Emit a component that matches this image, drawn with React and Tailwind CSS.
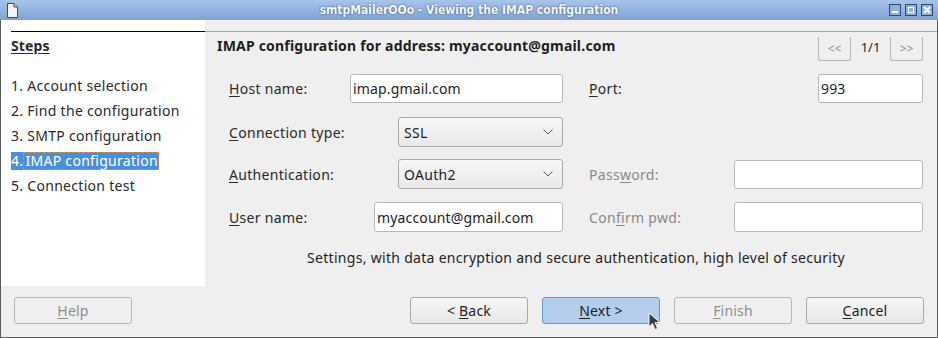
import React from "react";

function U({ children }) {
  return <span className="underline underline-offset-[2px] decoration-1">{children}</span>;
}

function TextInput({ value, className }) {
  return (
    <div className={"bg-white border border-[#b8b8b8] rounded-[3px] flex items-center pl-[2px] text-[14px] tracking-[0.15px] text-[#1e1e1e] " + className}>
      {value}
    </div>
  );
}

function Select({ value }) {
  return (
    <div className="w-[165px] h-[30px] rounded-[3px] border border-[#aaaaaa] bg-gradient-to-b from-[#f7f7f7] to-[#e9e9e9] flex items-center pl-[5px] pr-[9px] justify-between text-[14px] text-[#1e1e1e]">
      <span>{value}</span>
      <svg width="10" height="6" viewBox="0 0 10 6" className="text-[#555]">
        <path d="M0.5 0.5 L5 5 L9.5 0.5" fill="none" stroke="currentColor" strokeWidth="1" />
      </svg>
    </div>
  );
}

function Btn({ children, disabled, primary }) {
  let cls =
    "w-[118px] h-[27px] rounded-[3px] border flex items-center justify-center text-[14px] tracking-[0.2px] ";
  if (primary) cls += "bg-[#b4cdec] border-[#5f9ad8] text-[#1e1e1e]";
  else if (disabled) cls += "bg-[#efefef] border-[#b5b5b5] text-[#8e8e8e]";
  else cls += "bg-gradient-to-b from-[#f6f6f6] to-[#e8e8e8] border-[#a9a9a9] text-[#1e1e1e]";
  return (
    <div className={cls}>
      <span className="whitespace-pre">{children}</span>
    </div>
  );
}

export default function App() {
  return (
    <div className="relative w-[938px] h-[338px] overflow-hidden bg-[#efefef] font-['Noto_Sans',sans-serif] text-[14px] tracking-[0.3px] text-[#2a2a2a] flex flex-col">
      {/* Title bar */}
      <div className="h-[20px] shrink-0 flex items-center bg-gradient-to-b from-[#a8c4ea] to-[#7ea3d6]">
        <div className="w-[80px] flex items-center pl-[7px]">
          <svg width="11" height="15" viewBox="0 0 11 15">
            <path d="M0.5 0.5 H7 L10.5 4 V14.5 H0.5 Z" fill="#f4f4f4" stroke="#4a4a4a" strokeWidth="1" />
            <path d="M7 0.5 V4 H10.5" fill="#cfcfcf" stroke="#4a4a4a" strokeWidth="1" />
          </svg>
        </div>
        <div className="flex-1 text-center text-[#f6f6f6] font-bold text-[12px] tracking-normal leading-[20px] font-['DejaVu_Sans',sans-serif] [font-stretch:condensed] [text-shadow:0_0_2px_rgba(40,60,100,0.9)]">
          smtpMailerOOo - Viewing the IMAP configuration
        </div>
        <div className="w-[80px] flex justify-end gap-[4px] pr-[5px]">
          <div className="w-[12px] h-[12px] border border-[#2f4a70] bg-[#8fb0de] flex items-end justify-center pb-[2px]">
            <div className="w-[6px] h-[2px] bg-white" />
          </div>
          <div className="w-[12px] h-[12px] border border-[#2f4a70] bg-[#8fb0de] flex items-center justify-center">
            <div className="w-[6px] h-[6px] border-[1.5px] border-white" />
          </div>
          <div className="w-[12px] h-[12px] border border-[#2f4a70] bg-[#8fb0de] flex items-center justify-center">
            <svg width="8" height="8" viewBox="0 0 8 8">
              <path d="M1 1 L7 7 M7 1 L1 7" stroke="white" strokeWidth="2" />
            </svg>
          </div>
        </div>
      </div>

      {/* Body */}
      <div className="flex-1 flex flex-col border-x border-b border-[#5c5c5c]">
        <div className="h-[266px] flex">
          {/* Left steps panel */}
          <div className="w-[204px] bg-white pt-[11px] pl-[10px]">
            <div className="border-t border-black">
              <div className="mt-[6px] leading-[16px] font-bold underline underline-offset-[2px] tracking-[0.1px]">Steps</div>
              <div className="mt-[23px] flex flex-col gap-[7px]">
                <div className="h-[18px] leading-[18px]">1. Account selection</div>
                <div className="h-[18px] leading-[18px]">2. Find the configuration</div>
                <div className="h-[18px] leading-[18px]">3. SMTP configuration</div>
                <div className="h-[18px] leading-[18px] flex">
                  <span className="bg-[#4a8fdc] text-white flex">
                    <span>4.</span>
                    <span className="border border-dashed border-[#e08a28] leading-[16px] pl-[1px]">IMAP configuration</span>
                  </span>
                </div>
                <div className="h-[18px] leading-[18px]">5. Connection test</div>
              </div>
            </div>
          </div>

          {/* Right config panel */}
          <div className="flex-1 pt-[11px] flex flex-col">
            <div className="flex-1 border-t border-[#a6a6a6] flex flex-col">
              {/* header */}
              <div className="h-[30px] flex justify-between pl-[12px] pr-[14px]">
                <div className="mt-[6px] leading-[16px] font-bold text-[#1e1e1e] tracking-[0.2px]">
                  IMAP configuration for address: myaccount@gmail.com
                </div>
                <div className="mt-[5px] h-[24px] flex tracking-normal">
                  <div className="w-[33px] h-[24px] border-x border-b border-[#b5b5b5] rounded-b-[3px] flex items-center justify-center text-[#8e8e8e] text-[12px]">&lt;&lt;</div>
                  <div className="w-[39px] text-center leading-[20px] text-[#1e1e1e] text-[13px]">1/1</div>
                  <div className="w-[33px] h-[24px] border-x border-b border-[#b5b5b5] rounded-b-[3px] flex items-center justify-center text-[#8e8e8e] text-[12px]">&gt;&gt;</div>
                </div>
              </div>

              <div className="pl-[24px] pr-[14px] flex flex-col">
                {/* Row 1 */}
                <div className="mt-[12px] h-[29px] flex items-center">
                  <div className="w-[121px]"><U>H</U>ost name:</div>
                  <TextInput value="imap.gmail.com" className="w-[213px] h-[29px]" />
                  <div className="w-[26px]" />
                  <div className="flex-1"><U>P</U>ort:</div>
                  <TextInput value="993" className="w-[105px] h-[29px]" />
                </div>
                {/* Row 2 */}
                <div className="mt-[14px] h-[30px] flex items-center">
                  <div className="w-[169px]"><U>C</U>onnection type:</div>
                  <Select value="SSL" />
                </div>
                {/* Row 3 */}
                <div className="mt-[12px] h-[30px] flex items-center">
                  <div className="w-[169px]"><U>A</U>uthentication:</div>
                  <Select value="OAuth2" />
                  <div className="w-[26px]" />
                  <div className="flex-1 text-[#8a8a8a]">Pass<U>w</U>ord:</div>
                  <TextInput value="" className="w-[189px] h-[29px]" />
                </div>
                {/* Row 4 */}
                <div className="mt-[13px] h-[30px] flex items-center">
                  <div className="w-[145px]"><U>U</U>ser name:</div>
                  <TextInput value="myaccount@gmail.com" className="w-[189px] h-[30px]" />
                  <div className="w-[26px]" />
                  <div className="flex-1 text-[#8a8a8a]">Con<U>fi</U>rm pwd:</div>
                  <TextInput value="" className="w-[189px] h-[30px]" />
                </div>
                {/* Info */}
                <div className="mt-[18px] leading-[16px] text-center text-[#1e1e1e]">
                  Settings, with data encryption and secure authentication, high level of security
                </div>
              </div>
            </div>
          </div>
        </div>

        {/* Bottom buttons */}
        <div className="flex-1 flex pt-[11px] pl-[13px] pr-[13px]">
          <Btn disabled><U>H</U>elp</Btn>
          <div className="flex-1" />
          <div className="flex gap-[14px]">
            <Btn>{"< "}<U>B</U>ack</Btn>
            <Btn primary><U>N</U>ext &gt;</Btn>
            <Btn disabled><U>F</U>inish</Btn>
            <Btn><U>C</U>ancel</Btn>
          </div>
        </div>
      </div>

      {/* Mouse cursor */}
      <svg className="absolute left-[648px] top-[312px]" width="13" height="19" viewBox="0 0 13 19">
        <path d="M1 1 L1 15 L4.5 11.5 L7 17.5 L9.5 16.5 L7 10.5 L12 10.5 Z" fill="#3a3a3a" stroke="#f0f0f0" strokeWidth="1" strokeLinejoin="round" />
      </svg>
    </div>
  );
}
